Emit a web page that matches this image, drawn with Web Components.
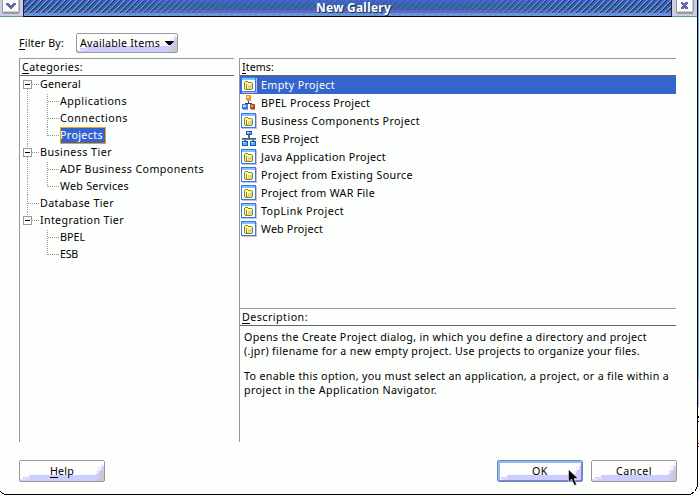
<!DOCTYPE html>
<html lang="en"><head><meta charset="utf-8"><title>New Gallery</title>
<style>
html,body{margin:0;padding:0;width:699px;height:495px;overflow:hidden;background:#fdfffc}
body{font:10.7px/17px "Noto Sans","Open Sans",sans-serif;color:#000}
</style></head><body><gallery-dialog></gallery-dialog>
<script>
const shadow=(el,html)=>{const r=el.attachShadow({mode:'open'});r.innerHTML=html;return r};

/* Text run with tracking set so that it fills the width w; key="1" underlines the first letter. */
class FitText extends HTMLElement{
 connectedCallback(){
  const t=this.getAttribute('text'),w=+this.getAttribute('w');
  const r=shadow(this,`<style>:host{display:inline-block;white-space:pre;flex:none}
  u{text-decoration:none;box-shadow:0 1px 0 currentColor;display:inline-block;line-height:11px;height:11px}</style><span></span>`);
  const s=r.querySelector('span');
  if(this.hasAttribute('key')){const u=document.createElement('u');u.textContent=t[0];s.append(u,t.slice(1))}
  else s.textContent=t;
  const n=s.getBoundingClientRect().width;
  s.style.letterSpacing=((w-n)/t.length)+'px';
 }}
customElements.define('fit-text',FitText);

const icons={
folder:`<rect x="1" y="1" width="15" height="15" fill="#d4b8ea"/><rect x="0" y="0" width="15" height="15" fill="#3a78e4"/><rect x="1" y="1" width="13" height="2" fill="#7cc4fa"/><rect x="1" y="3" width="13" height="11" fill="#fff"/><path d="M4 4h3v1h4v1h1v6h-1v1H4v-1H3V5h1z" fill="#908a10"/><path d="M4 5h3v1h4v1H5v5H4z" fill="#ffff98"/><rect x="6" y="7" width="5" height="5" fill="#e2d68c"/><path d="M6 7h4v1H7v3H6z" fill="#fffde0"/>`,
bpel:`<path d="M7 5v3M4 11V8h6v3" fill="none" stroke="#444" stroke-width="1" transform="translate(.5 .5)"/><rect x="5" y="0" width="5" height="5" fill="#f7941c"/><rect x="6" y="1" width="2" height="2" fill="#ffe0a0"/><rect x="1" y="9" width="6" height="5" fill="#3878f0"/><rect x="2" y="10" width="3" height="2" fill="#c0e0ff"/><rect x="9" y="9" width="5" height="5" fill="#c04818"/><rect x="10" y="10" width="2" height="2" fill="#ff9868"/><path d="M6 5h4v1H6zM2 14h5v1H2zM10 14h4v1h-4z" fill="#a098b8"/>`,
esb:`<path d="M1 7h14v2H1z" fill="#708898"/><path d="M1 7h14v1H1z" fill="#405868"/><path d="M7 4h2v3H7zM3 9h2v2H3zM11 9h2v2h-2z" fill="#607080"/><path d="M5 0h6v4H5zM1 10h6v5H1zM9 10h6v5H9z" fill="#1c50c0"/><path d="M6 1h4v2H6zM2 11h4v3H2zM10 11h4v3h-4z" fill="#50b0f8"/><path d="M6 1h2v1H6zM2 11h2v1H2zM10 11h2v1h-2z" fill="#d0f0ff"/>`};
class ItemIcon extends HTMLElement{connectedCallback(){
 shadow(this,`<style>:host{display:block;width:16px;height:16px;flex:none}svg{display:block}</style><svg width="16" height="16" shape-rendering="crispEdges">${icons[this.getAttribute('kind')]}</svg>`)}}
customElements.define('item-icon',ItemIcon);

class ItemRow extends HTMLElement{connectedCallback(){
 shadow(this,`<style>:host{display:flex;height:18px;align-items:center;padding-left:1px;box-sizing:border-box;line-height:18px}
 :host([selected]){background:#3465cc;color:#fff}fit-text{margin-left:4px}</style>
 <item-icon kind="${this.getAttribute('kind')||'folder'}"></item-icon><fit-text text="${this.getAttribute('text')}" w="${this.getAttribute('w')}"></fit-text>`)}}
customElements.define('item-row',ItemRow);

/* One tree line: trunk is the line of the root level, branch the connector to this node. */
class TreeNode extends HTMLElement{connectedCallback(){
 const k=this.getAttribute('kind'),last=this.hasAttribute('last'),g='stroke="#999" stroke-dasharray="1 1"';
 let d='';
 if(k==='child'){if(!this.hasAttribute('notrunk'))d+=`<path d="M7.5 0V17" ${g}/>`;
  d+=`<path d="M27.5 ${this.hasAttribute('first')?1:0}V${last?9:17}M28 8.5H39" ${g}/>`}
 else if(k==='leaf')d=`<path d="M7.5 0V17M8 8.5H19" ${g}/>`;
 else d=`${this.hasAttribute('top')?'':`<path d="M7.5 0V4" ${g}/>`}${last?'':`<path d="M7.5 13V17" ${g}/>`}<rect x="3.5" y="4.5" width="8" height="8" fill="#fff" stroke="#999"/><path d="M5 8.5H10" stroke="#000"/><path d="M12 8.5H19" ${g}/>`;
 shadow(this,`<style>:host{display:flex;height:17px}svg{flex:none}span{display:block;height:17px;line-height:16px}
 :host([selected]) span{background:#3465cc;color:#fff;outline:1px solid #f0a020;outline-offset:-1px;width:46px}</style>
 <svg width="${k==='child'?40:20}" height="17" shape-rendering="crispEdges">${d}</svg><span><fit-text text="${this.getAttribute('text')}" w="${this.getAttribute('w')}"></fit-text></span>`)}}
customElements.define('tree-node',TreeNode);

class TitledPane extends HTMLElement{connectedCallback(){
 shadow(this,`<style>:host{display:block;box-sizing:border-box}header{height:18px;box-sizing:border-box;border-top:1px solid #999;border-bottom:1px solid #666;padding:1px 0 0 2px;line-height:15px}</style>
 <header><fit-text key text="${this.getAttribute('label')}" w="${this.getAttribute('w')}"></fit-text></header><slot></slot>`)}}
customElements.define('titled-pane',TitledPane);

class PushButton extends HTMLElement{connectedCallback(){
 const w=+this.getAttribute('bw'),h=+this.getAttribute('bh'),def=this.hasAttribute('default');
 shadow(this,`<style>:host{display:grid;width:${w}px;height:${h}px;flex:none}svg,div{grid-area:1/1}svg{display:block}
 div{display:flex;align-items:center;justify-content:center;gap:5px;height:${h+1}px}</style>
 <svg width="${w}" height="${h}" shape-rendering="crispEdges"><rect x="1" y="1" width="${w-2}" height="${h-2}" fill="#fdfdfd"/>
 <path d="M1 ${h-1}V${h-3}H4V${h-5}H10V${h-7}H${w-9}V${h-8}H${w-7}V${h-12}H${w-4}V${h-16}H${w-1}V${h-1}z" fill="#ccf"/>
 <path d="M2 ${h-3}h3v-1h5v-1M${w-9} ${h-8}v-3h2v-4h3v-3h2" fill="none" stroke="#fce0fa"/>
 ${def?`<path d="M1.5 ${h-2}V1.5H${w-2}" fill="none" stroke="#88bff5" stroke-width="2"/><path d="M2 ${h-2}H${w-2}V2" fill="none" stroke="#7788d0" stroke-width="1"/>`:`<path d="M${w-8} ${h-1}V${h-3}H${w-6}V${h-7}H${w-4}V${h-11}H${w-1}V${h-1}z" fill="#c9c9cb"/>`}
 <rect x=".5" y=".5" width="${w-1}" height="${h-1}" rx="2" fill="none" stroke="${def?'#7284b8':'#999'}"/></svg><div><slot></slot></div>`)}}
customElements.define('push-button',PushButton);

class TitleBar extends HTMLElement{connectedCallback(){
 shadow(this,`<style>:host{display:flex;height:17px;width:697px}
 .b{box-sizing:border-box;height:17px;width:23px;flex:none;background:#cccce4;border-bottom:1px solid #5a9a98;padding-left:2px}.r{width:25px;padding-left:4px}
 .t{flex:1;display:grid;height:17px;box-sizing:border-box;border-left:1px solid #224;border-right:1px solid #224;border-bottom:1px solid #000}
 .t svg,.t div{grid-area:1/1;min-width:0}.t div{font:bold 12px/16px "Noto Sans","Open Sans",sans-serif;color:#fff;text-shadow:1px 1px 0 #223060;padding-left:292px;height:16px}svg{display:block}</style>
 <div class="b"><svg width="18" height="14" shape-rendering="crispEdges"><path d="M0 0h18v12h-1v2H1v-1H0z" fill="#999"/><path d="M1 0h16v12H1z" fill="#fcfcfc"/><path d="M16 0h1v12H2v-1h14z" fill="#ccc"/><path d="M4 3h3v1h1v1h2v-1h1v-1h3v2h-1v1h-1v1h-1v1h-1v1H8v-1H7v-1H6v-1H5v-1H4z" fill="#66a"/></svg></div>
 <div class="t"><svg width="100%" height="16" shape-rendering="crispEdges"><defs>
 <linearGradient id="g" x2="0" y2="1"><stop offset="0" stop-color="#4262cc"/><stop offset=".2" stop-color="#3563b8"/><stop offset=".25" stop-color="#31659c"/><stop offset=".62" stop-color="#31659c"/><stop offset=".66" stop-color="#6262cc"/><stop offset=".8" stop-color="#6262cc"/><stop offset=".84" stop-color="#649bd0"/><stop offset="1" stop-color="#649bd0"/></linearGradient>
 <pattern id="p" width="6" height="6" patternUnits="userSpaceOnUse"><path d="M0 5h1v1H0zM1 4h1v1H1zM2 3h1v1H2zM3 2h1v1H3zM4 1h1v1H4zM5 0h1v1H5z" fill="#6868d0"/></pattern>
 <pattern id="q" width="6" height="6" patternUnits="userSpaceOnUse"><path d="M1 5h1v1H1zM2 4h1v1H2zM3 3h1v1H3zM4 2h1v1H4zM5 1h1v1H5zM0 0h1v1H0z" fill="#182860"/><path d="M0 4h1v1H0zM1 3h1v1H1zM2 2h1v1H2zM3 1h1v1H3zM4 0h1v1H4zM5 5h1v1H5z" fill="#75a8dc"/></pattern>
 <linearGradient id="f"><stop offset="0" stop-color="#fff"/><stop offset=".15" stop-color="#fff" stop-opacity=".85"/><stop offset=".32" stop-color="#fff" stop-opacity="0"/><stop offset=".66" stop-color="#fff" stop-opacity="0"/><stop offset=".85" stop-color="#fff" stop-opacity=".85"/><stop offset="1" stop-color="#fff"/></linearGradient><mask id="m"><rect width="100%" height="13" fill="url(#f)"/></mask></defs>
 <rect width="100%" height="16" fill="url(#g)"/><rect width="100%" height="15" fill="url(#p)" opacity=".8"/><rect width="100%" height="13" fill="url(#q)" mask="url(#m)"/></svg><div><fit-text text="New Gallery" w="75"></fit-text></div></div>
 <div class="b r"><svg width="18" height="14" shape-rendering="crispEdges"><path d="M0 0h18v12h-1v2H1v-1H0z" fill="#999"/><path d="M1 0h16v12H1z" fill="#fcfcfc"/><path d="M16 0h1v12H2v-1h14z" fill="#ccc"/><path d="M5 2h2v1h2v-1h3v2h-1v1h-1v1h1v1h1v2H9v-1H8v1H5v-2h1v-1h1v-1H6v-1H5z" fill="#66a"/></svg></div>`)}}
customElements.define('title-bar',TitleBar);

const node=(t,w,k,x='')=>`<tree-node text="${t}" w="${w}" kind="${k}" ${x}></tree-node>`;
const item=(t,w,k='folder',x='')=>`<item-row text="${t}" w="${w}" kind="${k}" ${x}></item-row>`;
class GalleryDialog extends HTMLElement{connectedCallback(){
 shadow(this,`<style>
 :host{display:grid;width:699px;height:495px;background:#fdfffc}
 .frame,main{grid-area:1/1}.frame{display:block}
 main{width:697px;height:494px}
 .filter{display:flex;align-items:center;height:41px;padding:11px 0 0 19px;box-sizing:border-box}
 .filter>fit-text{padding-bottom:0}.filter push-button{margin-left:12px}
 .panes{display:grid;grid-template-columns:220px 437px;height:384px;padding-left:19px}
 .left,.right{border-left:1px solid #999}
 .left titled-pane{width:214px}
 .right{display:grid;grid-template-rows:250px 134px}
 .right titled-pane{width:436px}
 .desc{padding:4px 0 0 4px;line-height:14px}p{margin:0 0 11px;height:28px}p fit-text{display:block}
 footer{display:flex;padding:18px 0 0 19px}
 .ok{margin-left:392px}.cancel{margin-left:8px}
 .cursor{position:absolute;left:568px;top:469px}
 </style>
 <svg class="frame" width="699" height="495" shape-rendering="crispEdges"><rect x="698" width="1" height="380" fill="#6cb5f8"/><rect x="698" y="380" width="1" height="25" fill="#b8b8ee"/><path d="M698 403h1v1h-1zM698 406h1v1h-1z" fill="#99a"/><path d="M698 416h1v2h-1zM698 421h1v1h-1z"/><path d="M698 443h1v1h-1zM698 446h1v1h-1z" fill="#d00"/>
 <path d="M697.5 0V485.500L696.500 488.500L694.500 491.500L690.500 494.500H4.500L0 491.500" fill="none" stroke="#000"/></svg>
 <main><title-bar></title-bar>
 <div class="filter"><fit-text key text="Filter By:" w="45"></fit-text><push-button bw="102" bh="20"><fit-text text="Available Items" w="80"></fit-text><svg width="9" height="5" shape-rendering="crispEdges"><path d="M0 0h9v1H8v1H7v1H6v1H3V3H2V2H1V1H0z"/></svg></push-button></div>
 <div class="panes"><div class="left"><titled-pane label="Categories:" w="61">
 ${node('General',41,'group','top')}${node('Applications',67,'child','first')}${node('Connections',68,'child')}${node('Projects',43,'child','last selected')}
 ${node('Business Tier',72,'group')}${node('ADF Business Components',144,'child','first')}${node('Web Services',69,'child','last')}${node('Database Tier',74,'leaf')}
 ${node('Integration Tier',84,'group','last')}${node('BPEL',25,'child','first notrunk')}${node('ESB',18,'child','last notrunk')}
 </titled-pane></div>
 <div class="right"><titled-pane label="Items:" w="32">
 ${item('Empty Project',74,'folder','selected')}${item('BPEL Process Project',109,'bpel')}${item('Business Components Project',159)}${item('ESB Project',58,'esb')}${item('Java Application Project',125)}${item('Project from Existing Source',152)}${item('Project from WAR File',114)}${item('TopLink Project',83)}${item('Web Project',62)}
 </titled-pane><titled-pane label="Description:" w="66"><div class="desc">
 <p><fit-text text="Opens the Create Project dialog, in which you define a directory and project" w="403"></fit-text><fit-text text="(.jpr) filename for a new empty project. Use projects to organize your files." w="396"></fit-text></p>
 <p><fit-text text="To enable this option, you must select an application, a project, or a file within a" w="425"></fit-text><fit-text text="project in the Application Navigator." w="193"></fit-text></p></div></titled-pane></div></div>
 <footer><push-button bw="86" bh="22"><fit-text key text="Help" w="24"></fit-text></push-button><push-button class="ok" default bw="86" bh="22"><fit-text text="OK" w="16"></fit-text></push-button><push-button class="cancel" bw="86" bh="22"><fit-text text="Cancel" w="36"></fit-text></push-button></footer>
 </main><svg class="cursor" width="12" height="18"><path d="M.5 .5V13L3.500 10L6.500 16.500L8.500 15.500L6 9.500H10z" stroke="#fff" stroke-width=".5"/></svg>`)}}
customElements.define('gallery-dialog',GalleryDialog);
</script></body></html>
